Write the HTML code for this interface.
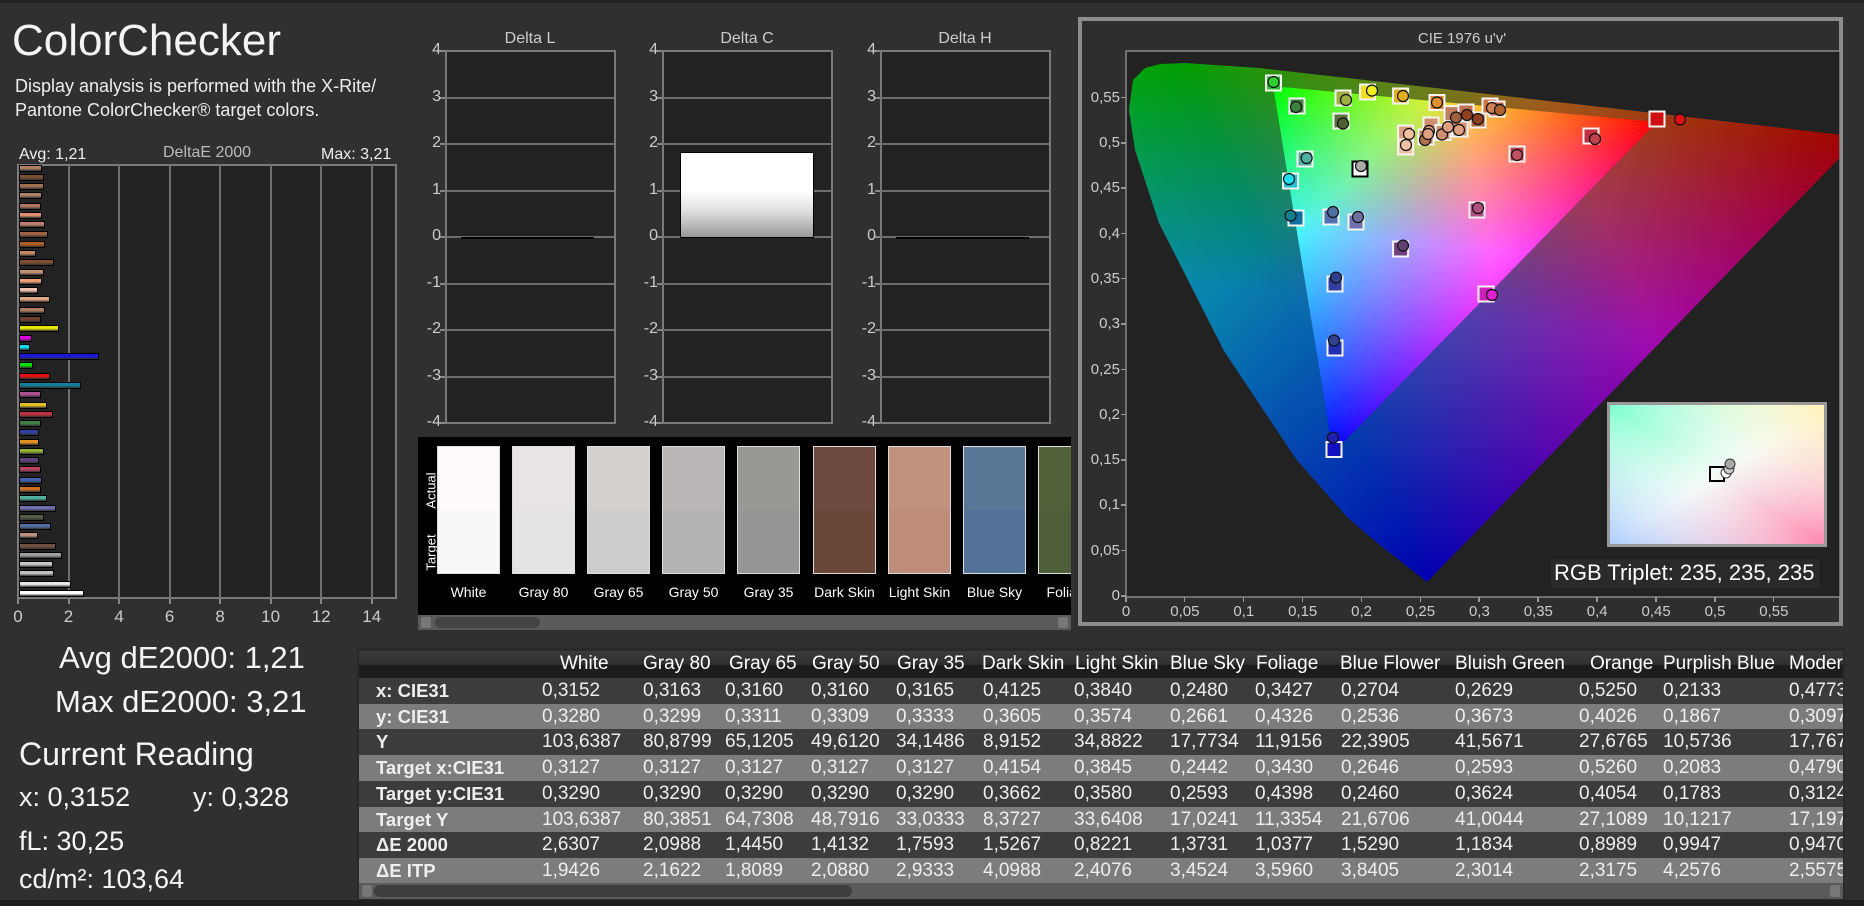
<!DOCTYPE html>
<html><head><meta charset="utf-8">
<style>
*{margin:0;padding:0;box-sizing:border-box}
body{width:1864px;height:906px;background:#303030;overflow:hidden;position:relative;font-family:"Liberation Sans",sans-serif;color:#eee}
.a{position:absolute;white-space:nowrap}
.lbl{position:absolute;font-size:15px;color:#ccc;white-space:nowrap}
.box{position:absolute;background:#222;border:2px solid #7a7a7a}
.hl{position:absolute;height:2px;background:#6e6e6e}
.vl{position:absolute;width:2px;background:#6e6e6e}
.sw{position:absolute;top:9px;width:63px;height:128px;border:1px solid #ddd}
.swl{position:absolute;top:147px;width:85px;text-align:center;font-size:14px;color:#fff}
.row{position:absolute;left:359px;width:1484px;height:26px;font-size:19px;overflow:hidden}
.row span{position:absolute;top:2px}
.row b{position:absolute;top:2px;left:17px;font-size:18.5px}
.dk{background:#3c3c3c}.lt{background:#7c7c7c}
</style></head><body>

<div class="a" style="left:0;top:0;width:1864px;height:3px;background:#222"></div>
<div class="a" style="left:12px;top:16px;font-size:44px;color:#f4f4f4">ColorChecker</div>
<div class="a" style="left:15px;top:74px;font-size:18px;line-height:24px;color:#eee">Display analysis is performed with the X-Rite/<br>Pantone ColorChecker® target colors.</div>

<div class="a" style="left:19px;top:146px;font-size:16px;color:#eee">Avg: 1,21</div>
<div class="a" style="left:163px;top:144px;font-size:16px;color:#bbb">DeltaE 2000</div>
<div class="a" style="left:321px;top:146px;font-size:16px;color:#eee">Max: 3,21</div>
<div class="box" style="left:17px;top:164px;width:380px;height:435px"></div>
<div id="bars"></div>
<div id="dlabels"></div>

<div class="a" style="left:490px;top:30px;font-size:16px;color:#ccc;width:80px;text-align:center">Delta L</div>
<div class="a" style="left:707px;top:30px;font-size:16px;color:#ccc;width:80px;text-align:center">Delta C</div>
<div class="a" style="left:925px;top:30px;font-size:16px;color:#ccc;width:80px;text-align:center">Delta H</div>
<div id="deltas"></div>
<div class="a" style="left:680px;top:152px;width:134px;height:86px;border:1px solid #000;background:linear-gradient(#fff 0%,#fff 45%,#ddd 70%,#999 100%)"></div>
<div class="a" style="left:461px;top:237px;width:133px;height:2px;background:#000"></div>
<div class="a" style="left:896px;top:237px;width:133px;height:2px;background:#000"></div>

<div class="a" style="left:418px;top:437px;width:653px;height:178px;background:#000;overflow:hidden">
 <div class="a" style="left:-17px;top:46px;font-size:13px;color:#fff;transform:rotate(-90deg);width:60px;text-align:center">Actual</div>
 <div class="a" style="left:-17px;top:108px;font-size:13px;color:#fff;transform:rotate(-90deg);width:60px;text-align:center">Target</div>
 <div class="sw" style="left:19px;background:linear-gradient(#fffafc 50%,#f8f8f8 50%)"></div>
 <div class="sw" style="left:94px;background:linear-gradient(#e8e4e4 50%,#e4e4e4 50%)"></div>
 <div class="sw" style="left:169px;background:linear-gradient(#d3d0ce 50%,#cdcdcd 50%)"></div>
 <div class="sw" style="left:244px;background:linear-gradient(#bab6b5 50%,#b4b4b4 50%)"></div>
 <div class="sw" style="left:319px;background:linear-gradient(#9a9894 50%,#969696 50%)"></div>
 <div class="sw" style="left:395px;background:linear-gradient(#6d4a3d 50%,#6a4638 50%)"></div>
 <div class="sw" style="left:470px;background:linear-gradient(#c1917f 50%,#bd8c7a 50%)"></div>
 <div class="sw" style="left:545px;background:linear-gradient(#587898 50%,#52729a 50%)"></div>
 <div class="sw" style="left:620px;background:linear-gradient(#506038 50%,#4e5e3a 50%)"></div>
 <div class="swl" style="left:8px">White</div>
 <div class="swl" style="left:83px">Gray 80</div>
 <div class="swl" style="left:158px">Gray 65</div>
 <div class="swl" style="left:233px">Gray 50</div>
 <div class="swl" style="left:308px">Gray 35</div>
 <div class="swl" style="left:384px">Dark Skin</div>
 <div class="swl" style="left:459px">Light Skin</div>
 <div class="swl" style="left:534px">Blue Sky</div>
 <div class="swl" style="left:609px">Foliage</div>
</div>
<div class="a" style="left:418px;top:615px;width:653px;height:15px;background:#5a5a5a"></div>
<div class="a" style="left:421px;top:617px;width:10px;height:11px;background:#777;border-radius:2px"></div>
<div class="a" style="left:435px;top:617px;width:105px;height:11px;background:#444;border-radius:6px"></div>
<div class="a" style="left:1058px;top:617px;width:10px;height:11px;background:#777;border-radius:2px"></div>

<div class="a" style="left:1078px;top:17px;width:765px;height:609px;border:4px solid #8c8c8c;background:#2e2e2e"></div>
<div class="a" style="left:1412px;top:30px;font-size:15px;color:#ccc;width:100px;text-align:center">CIE 1976 u'v'</div>
<svg class="a" style="left:0;top:0" width="1864" height="906" viewBox="0 0 1864 906">
 <defs>
  <clipPath id="pc"><rect x="1127" y="52" width="712" height="544"/></clipPath>
  <clipPath id="hs"><path d="M1427,582 L1381,546 L1347,517 L1296,459 L1224,351 L1159,223 L1135,150 L1129,110 L1133,80 L1145,68 L1160,64 L1185,63 L1259,68 L1365,80 L1601,107 L1860,137 Z"/></clipPath>
  <linearGradient id="gR" gradientUnits="userSpaceOnUse" x1="1657" y1="122" x2="1289" y2="182"><stop offset="0" stop-color="#ff0000"/><stop offset=".5" stop-color="#ff2020"/><stop offset="1" stop-color="#000"/></linearGradient>
  <linearGradient id="gG" gradientUnits="userSpaceOnUse" x1="1273" y1="86" x2="1487" y2="296"><stop offset="0" stop-color="#00ff00"/><stop offset=".4" stop-color="#20f020"/><stop offset="1" stop-color="#000"/></linearGradient>
  <linearGradient id="gB" gradientUnits="userSpaceOnUse" x1="1333" y1="453" x2="1367" y2="95"><stop offset="0" stop-color="#0000ff"/><stop offset=".6" stop-color="#3030ff"/><stop offset="1" stop-color="#000"/></linearGradient>
  <linearGradient id="hR" gradientUnits="userSpaceOnUse" x1="1856" y1="143" x2="1337" y2="397"><stop offset="0" stop-color="#a00000"/><stop offset=".45" stop-color="#a00010"/><stop offset="1" stop-color="#000"/></linearGradient>
  <linearGradient id="hG" gradientUnits="userSpaceOnUse" x1="1173" y1="61" x2="1564" y2="442"><stop offset="0" stop-color="#00a000"/><stop offset=".35" stop-color="#008010"/><stop offset="1" stop-color="#000"/></linearGradient>
  <linearGradient id="hB" gradientUnits="userSpaceOnUse" x1="1428" y1="582" x2="1486" y2="99"><stop offset="0" stop-color="#0000b0"/><stop offset=".55" stop-color="#0808a8"/><stop offset="1" stop-color="#000"/></linearGradient>
  <linearGradient id="ins1" x1="0" y1="0" x2="1" y2="1"><stop offset="0" stop-color="#80ffd0"/><stop offset=".5" stop-color="#f4fbf6"/><stop offset="1" stop-color="#ff88b0"/></linearGradient>
  <linearGradient id="ins2" x1="1" y1="0" x2="0" y2="1"><stop offset="0" stop-color="#fff0b0" stop-opacity=".9"/><stop offset=".5" stop-color="#fff" stop-opacity="0"/><stop offset="1" stop-color="#a8c8ff" stop-opacity=".9"/></linearGradient>
 </defs>
 <rect x="1126" y="51" width="714" height="546" fill="#222" stroke="#888" stroke-width="1.5"/>
 <g clip-path="url(#pc)" style="isolation:isolate">
  <g clip-path="url(#hs)">
   <rect x="1120" y="50" width="740" height="550" fill="#000"/>
   <rect x="1120" y="50" width="740" height="550" fill="url(#hR)" style="mix-blend-mode:screen"/>
   <rect x="1120" y="50" width="740" height="550" fill="url(#hG)" style="mix-blend-mode:screen"/>
   <rect x="1120" y="50" width="740" height="550" fill="url(#hB)" style="mix-blend-mode:screen"/>
   <g>
    <polygon points="1657,122 1273,86 1333,453" fill="#000"/>
    <polygon points="1657,122 1273,86 1333,453" fill="url(#gR)" style="mix-blend-mode:screen"/>
    <polygon points="1657,122 1273,86 1333,453" fill="url(#gG)" style="mix-blend-mode:screen"/>
    <polygon points="1657,122 1273,86 1333,453" fill="url(#gB)" style="mix-blend-mode:screen"/>
   </g>
  </g>
 </g>
 <g id="mk"></g>
 <rect x="1607" y="402" width="220" height="145" fill="#999"/>
 <rect x="1610" y="405" width="214" height="139" fill="url(#ins1)"/>
 <rect x="1610" y="405" width="214" height="139" fill="url(#ins2)"/>
 <rect x="1710" y="467" width="14" height="14" fill="none" stroke="#000" stroke-width="2"/>
 <circle cx="1726" cy="473" r="5" fill="#fff" stroke="#333"/>
 <circle cx="1729" cy="469" r="5" fill="#ccc" stroke="#333"/>
 <circle cx="1730" cy="464" r="5" fill="#aaa" stroke="#333"/>
 <rect x="1551" y="559" width="268" height="29" fill="#2a2a2a"/>
</svg>
<div class="a" style="left:1554px;top:560px;font-size:22px;color:#fff">RGB Triplet: 235, 235, 235</div>
<div id="cielab"></div>

<div class="a" style="left:59px;top:640px;font-size:31px;color:#f4f4f4">Avg dE2000: 1,21</div>
<div class="a" style="left:55px;top:684px;font-size:31px;color:#f4f4f4">Max dE2000: 3,21</div>
<div class="a" style="left:19px;top:736px;font-size:32px;color:#f4f4f4">Current Reading</div>
<div class="a" style="left:19px;top:782px;font-size:27px;color:#f4f4f4">x: 0,3152</div>
<div class="a" style="left:193px;top:782px;font-size:27px;color:#f4f4f4">y: 0,328</div>
<div class="a" style="left:19px;top:826px;font-size:27px;color:#f4f4f4">fL: 30,25</div>
<div class="a" style="left:19px;top:864px;font-size:27px;color:#f4f4f4">cd/m²: 103,64</div>

<div class="a" style="left:357px;top:648px;width:1488px;height:253px;background:#2a2a2a"></div>
<div class="row" style="top:651px;height:27px;background:linear-gradient(#3a3a3a 0%,#303030 50%,#1c1c1c 52%,#1e1e1e 100%);color:#fff">
<span style="left:201px">White</span><span style="left:284px">Gray 80</span><span style="left:370px">Gray 65</span><span style="left:453px">Gray 50</span><span style="left:538px">Gray 35</span><span style="left:623px">Dark Skin</span><span style="left:716px">Light Skin</span><span style="left:811px">Blue Sky</span><span style="left:897px">Foliage</span><span style="left:981px">Blue Flower</span><span style="left:1096px">Bluish Green</span><span style="left:1231px">Orange</span><span style="left:1304px">Purplish Blue</span><span style="left:1430px">Modera</span></div>
<div id="tbl"></div>
<div class="a" style="left:359px;top:883px;width:1484px;height:16px;background:#5a5a5a"></div>
<div class="a" style="left:362px;top:885px;width:10px;height:12px;background:#777;border-radius:2px"></div>
<div class="a" style="left:374px;top:885px;width:478px;height:12px;background:#3e3e3e;border-radius:6px"></div>
<div class="a" style="left:1830px;top:885px;width:10px;height:12px;background:#777;border-radius:2px"></div>
<div class="a" style="left:0;top:900px;width:1864px;height:6px;background:#1e1e1e"></div>

<script>
function H(id,s){document.getElementById(id).innerHTML=s;}
var ys=[413,435,457,479,505,527,549,575,598,620,642,668,690,712,734,760,782,804,830,852,874,896,922,944,966,992,1014,1036,1058,1084,1106,1128,1150,1176,1198,1220,1246,1268,1290,1312,1338,1360,1382,1404,1430,1452];
var xe=[127,133,133,127,123,127,136,145,136,109,163,133,127,115,151,136,123,178,97,91,296,100,151,244,123,142,160,123,118,118,133,118,123,127,123,142,169,133,154,115,169,187,160,163,214,253];
var cs=["#b08060","#7a5030","#a07050","#b08068","#b07860","#e09070","#c08070","#a06040","#b06020","#c08860","#805030","#c09070","#f0a070","#f0c0b0","#e0a880","#b08060","#704030","#e8e800","#e000e0","#00e0f0","#1818d8","#00e000","#e01010","#1080a0","#b05090","#e0c020","#c03040","#408040","#3040a0","#e09020","#90b030","#604080","#c04060","#4060b0","#d07020","#50b0a0","#7070b0","#506040","#5070a0","#c09080","#705040","#a0a0a0","#c8c8c8","#c0c0c0","#e8e8e8","#ffffff"];
var s="";
[68,118,169,219,270,320,371].forEach(function(x){s+='<div class="vl" style="left:'+x+'px;top:165px;height:433px"></div>';});
for(var i=0;i<ys.length;i++){var y=164+(ys[i]/3-134)*1.226-3.5,w=xe[i]/3-19;s+='<div class="a" style="left:19px;top:'+y+'px;width:'+w+'px;height:7px;border:1px solid #000;background:linear-gradient('+cs[i]+','+cs[i]+' 50%,#333)"></div>';}
H("bars",s);
s="";
["0","2","4","6","8","10","12","14"].forEach(function(t,k){var x=18+50.53*k;s+='<div class="lbl" style="left:'+(x-20)+'px;top:607px;width:40px;text-align:center;font-size:17px">'+t+'</div><div class="a" style="left:'+(x-1)+'px;top:599px;width:2px;height:5px;background:#888"></div>';});
H("dlabels",s);
s="";
[445,662,880].forEach(function(L){
 s+='<div class="box" style="left:'+L+'px;top:50px;width:171px;height:374px"></div>';
 for(var k=0;k<9;k++){var y=51+k*46.5;
  if(k>0&&k<8)s+='<div class="hl" style="left:'+(L+1)+'px;top:'+(y-1)+'px;width:168px"></div>';
  s+='<div class="a" style="left:'+(L-5)+'px;top:'+(y-1)+'px;width:5px;height:2px;background:#888"></div>';
  s+='<div class="lbl" style="left:'+(L-34)+'px;top:'+(y-10)+'px;width:30px;text-align:right;font-size:16px">'+(4-k)+'</div>';}
});
H("deltas",s);
s="";
var vl=["0","0,05","0,1","0,15","0,2","0,25","0,3","0,35","0,4","0,45","0,5","0,55"];
for(var k=0;k<12;k++){var y=596-45.3*k;s+='<div class="lbl" style="left:1070px;top:'+(y-9)+'px;width:50px;text-align:right;font-size:15px">'+vl[k]+'</div><div class="a" style="left:1121px;top:'+(y-1)+'px;width:5px;height:1.5px;background:#999"></div>';
 var x=1126+58.9*k;s+='<div class="lbl" style="left:'+(x-25)+'px;top:603px;width:50px;text-align:center;font-size:15px">'+vl[k]+'</div><div class="a" style="left:'+(x-1)+'px;top:597px;width:1.5px;height:5px;background:#999"></div>';}
H("cielab",s);
var sq=[[1273.5,83,"#30c030"],[1297,106,"#408040"],[1343,98,"#a0b040"],[1367.5,92,"#f0e020"],[1400.6,96,"#e0b020"],[1437,102.5,"#e08030"],[1341,121,"#607040"],[1452,113.6,"#c08060"],[1466,112,"#c07050"],[1478,120,"#b06040"],[1490,106,"#d07040"],[1497,109,"#c06040"],[1657,119,"#d01010"],[1591,136,"#c03040"],[1517,154,"#c04050"],[1405.6,133,"#e0a080"],[1405.6,147,"#f0c0a0"],[1431,125,"#d09070"],[1426,137,"#c08060"],[1443,132.5,"#d09070"],[1460,129,"#d09070"],[1305,159,"#50b0a0"],[1360,169,"#ddd"],[1290.6,181,"#20c0d0"],[1296,218,"#1070a0"],[1331,217,"#5070b0"],[1356,222,"#7070b0"],[1477,210,"#b05080"],[1400.6,249,"#704080"],[1335,284,"#3040a0"],[1486,294,"#d020c0"],[1335,348,"#2030b0"],[1334,449.5,"#1010c0"]];
var ci=[[1273.5,82,"#30d030"],[1296,107,"#408040"],[1346,100,"#a0b040"],[1372,90.6,"#f0f020"],[1403,96,"#e0b020"],[1437,102.5,"#e09030"],[1343,123.5,"#506030"],[1456,117.5,"#a06040"],[1467,115,"#904020"],[1478,119,"#904020"],[1492,108,"#d08050"],[1500,110,"#b06030"],[1680,119.5,"#e01010"],[1595,139,"#c04050"],[1517,155,"#c05060"],[1409,134,"#f0c0a0"],[1406,145,"#f0c0a0"],[1425,140,"#b07050"],[1429,131,"#e0a080"],[1442,134.5,"#d09070"],[1448,127,"#e0a080"],[1459,130,"#e0a080"],[1428,134,"#e0a080"],[1306.6,158,"#50b0a0"],[1361,166,"#aaa"],[1289,179,"#20e0f0"],[1290.6,215.6,"#108090"],[1333,212,"#5070a0"],[1358,217,"#7070a0"],[1478,208,"#b05080"],[1403,245.6,"#604070"],[1336,277.6,"#304090"],[1492,295,"#e020d0"],[1334,340.5,"#304090"],[1333,437.7,"#2020b0"]];
s="";
sq.forEach(function(p){var blk=p[2]=="#ddd";s+='<rect x="'+(p[0]-7.5)+'" y="'+(p[1]-7.5)+'" width="15" height="15" fill="'+(blk?"#fff":p[2])+'" stroke="'+(blk?"#000":"#f4f4f4")+'" stroke-width="2"/>';});
ci.forEach(function(p){s+='<circle cx="'+p[0]+'" cy="'+p[1]+'" r="5.5" fill="'+p[2]+'" stroke="#111" stroke-width="1.2"/>';});
H("mk",s);
var rows=[["x: CIE31","0,3152","0,3163","0,3160","0,3160","0,3165","0,4125","0,3840","0,2480","0,3427","0,2704","0,2629","0,5250","0,2133","0,4773"],
["y: CIE31","0,3280","0,3299","0,3311","0,3309","0,3333","0,3605","0,3574","0,2661","0,4326","0,2536","0,3673","0,4026","0,1867","0,3097"],
["Y","103,6387","80,8799","65,1205","49,6120","34,1486","8,9152","34,8822","17,7734","11,9156","22,3905","41,5671","27,6765","10,5736","17,7673"],
["Target x:CIE31","0,3127","0,3127","0,3127","0,3127","0,3127","0,4154","0,3845","0,2442","0,3430","0,2646","0,2593","0,5260","0,2083","0,4790"],
["Target y:CIE31","0,3290","0,3290","0,3290","0,3290","0,3290","0,3662","0,3580","0,2593","0,4398","0,2460","0,3624","0,4054","0,1783","0,3124"],
["Target Y","103,6387","80,3851","64,7308","48,7916","33,0333","8,3727","33,6408","17,0241","11,3354","21,6706","41,0044","27,1089","10,1217","17,1971"],
["ΔE 2000","2,6307","2,0988","1,4450","1,4132","1,7593","1,5267","0,8221","1,3731","1,0377","1,5290","1,1834","0,8989","0,9947","0,9470"],
["ΔE ITP","1,9426","2,1622","1,8089","2,0880","2,9333","4,0988","2,4076","3,4524","3,5960","3,8405","2,3014","2,3175","4,2576","2,5575"]];
var xs=[183,284,366,452,537,624,715,811,896,982,1096,1220,1304,1430];
s="";
rows.forEach(function(r,i){s+='<div class="row '+(i%2?"lt":"dk")+'" style="top:'+(678+i*25.7)+'px"><b>'+r[0]+'</b>';for(var j=1;j<r.length;j++)s+='<span style="left:'+xs[j-1]+'px">'+r[j]+'</span>';s+='</div>';});
H("tbl",s);
</script>
</body></html>
